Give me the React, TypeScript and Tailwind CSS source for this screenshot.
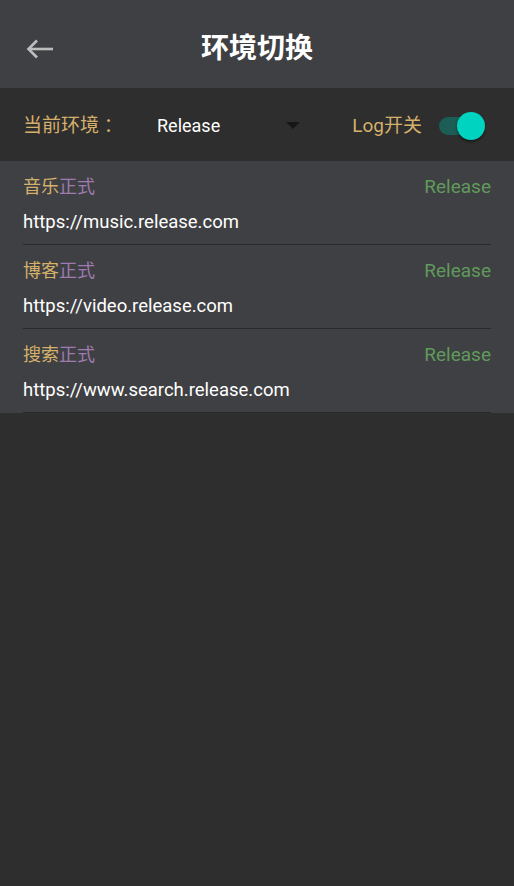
import React from "react";

const items = [
  { name: "音乐", url: "https://music.release.com" },
  { name: "博客", url: "https://video.release.com" },
  { name: "搜索", url: "https://www.search.release.com" },
];

export default function App() {
  return (
    <div
      className="w-[514px] h-[886px] bg-[#2e2e2e] flex flex-col"
      style={{ fontFamily: 'Roboto, "Noto Sans CJK SC", sans-serif' }}
    >
      {/* Header */}
      <div className="h-[88px] bg-[#3f4043] flex items-center relative shrink-0 pt-[10px]">
        <div className="pl-[26px] flex items-center">
          <svg width="28" height="20" viewBox="0 0 28 20" fill="none">
            <path d="M27 10H3" stroke="#bdbdbd" strokeWidth="2.6" />
            <path d="M11 1.5L2.5 10L11 18.5" stroke="#bdbdbd" strokeWidth="2.6" fill="none" />
          </svg>
        </div>
        <div className="absolute inset-0 pt-[10px] flex items-center justify-center pointer-events-none">
          <span className="text-white text-[28px] font-bold leading-none">环境切换</span>
        </div>
      </div>

      {/* Filter bar */}
      <div className="h-[73px] bg-[#2e2e2e] flex items-center pl-[23px] pr-[29px] pt-[2px] shrink-0">
        <span className="w-[134px] text-[19px] text-[#d5b06b] leading-none">当前环境 ：</span>
        <div className="w-[143px] flex items-center justify-between">
          <span className="text-white text-[18px] leading-none">Release</span>
          <svg width="14" height="7" viewBox="0 0 14 7">
            <path d="M0 0H14L7 7Z" fill="#161616" />
          </svg>
        </div>
        <span className="ml-auto text-[19px] text-[#d5b06b] leading-none">Log开关</span>
        <div className="relative w-[46px] h-[28px] ml-[17px]">
          <div className="absolute left-0 top-[5px] w-[39px] h-[18px] rounded-full bg-[#1c5d55]" />
          <div className="absolute right-0 top-0 w-[28px] h-[28px] rounded-full bg-[#00d3c0] shadow-[0_2px_3px_rgba(0,0,0,0.45)]" />
        </div>
      </div>

      {/* List */}
      <div className="bg-[#3f4043] px-[23px] shrink-0">
        {items.map((it) => (
          <div key={it.name}>
            <div className="pt-[14px] flex items-center justify-between h-[38px]">
              <span className="text-[18px] leading-[24px]">
                <span className="text-[#d5b06b]">{it.name}</span>
                <span className="text-[#9d7bb0]">正式</span>
              </span>
              <span className="text-[19px] leading-[24px] text-[#5f9a5b]">Release</span>
            </div>
            <div className="mt-[11px] text-white text-[18.5px] leading-[24px] pb-[10px]">{it.url}</div>
            <div className="h-px bg-[#2a2a2a]" />
          </div>
        ))}
      </div>
    </div>
  );
}
